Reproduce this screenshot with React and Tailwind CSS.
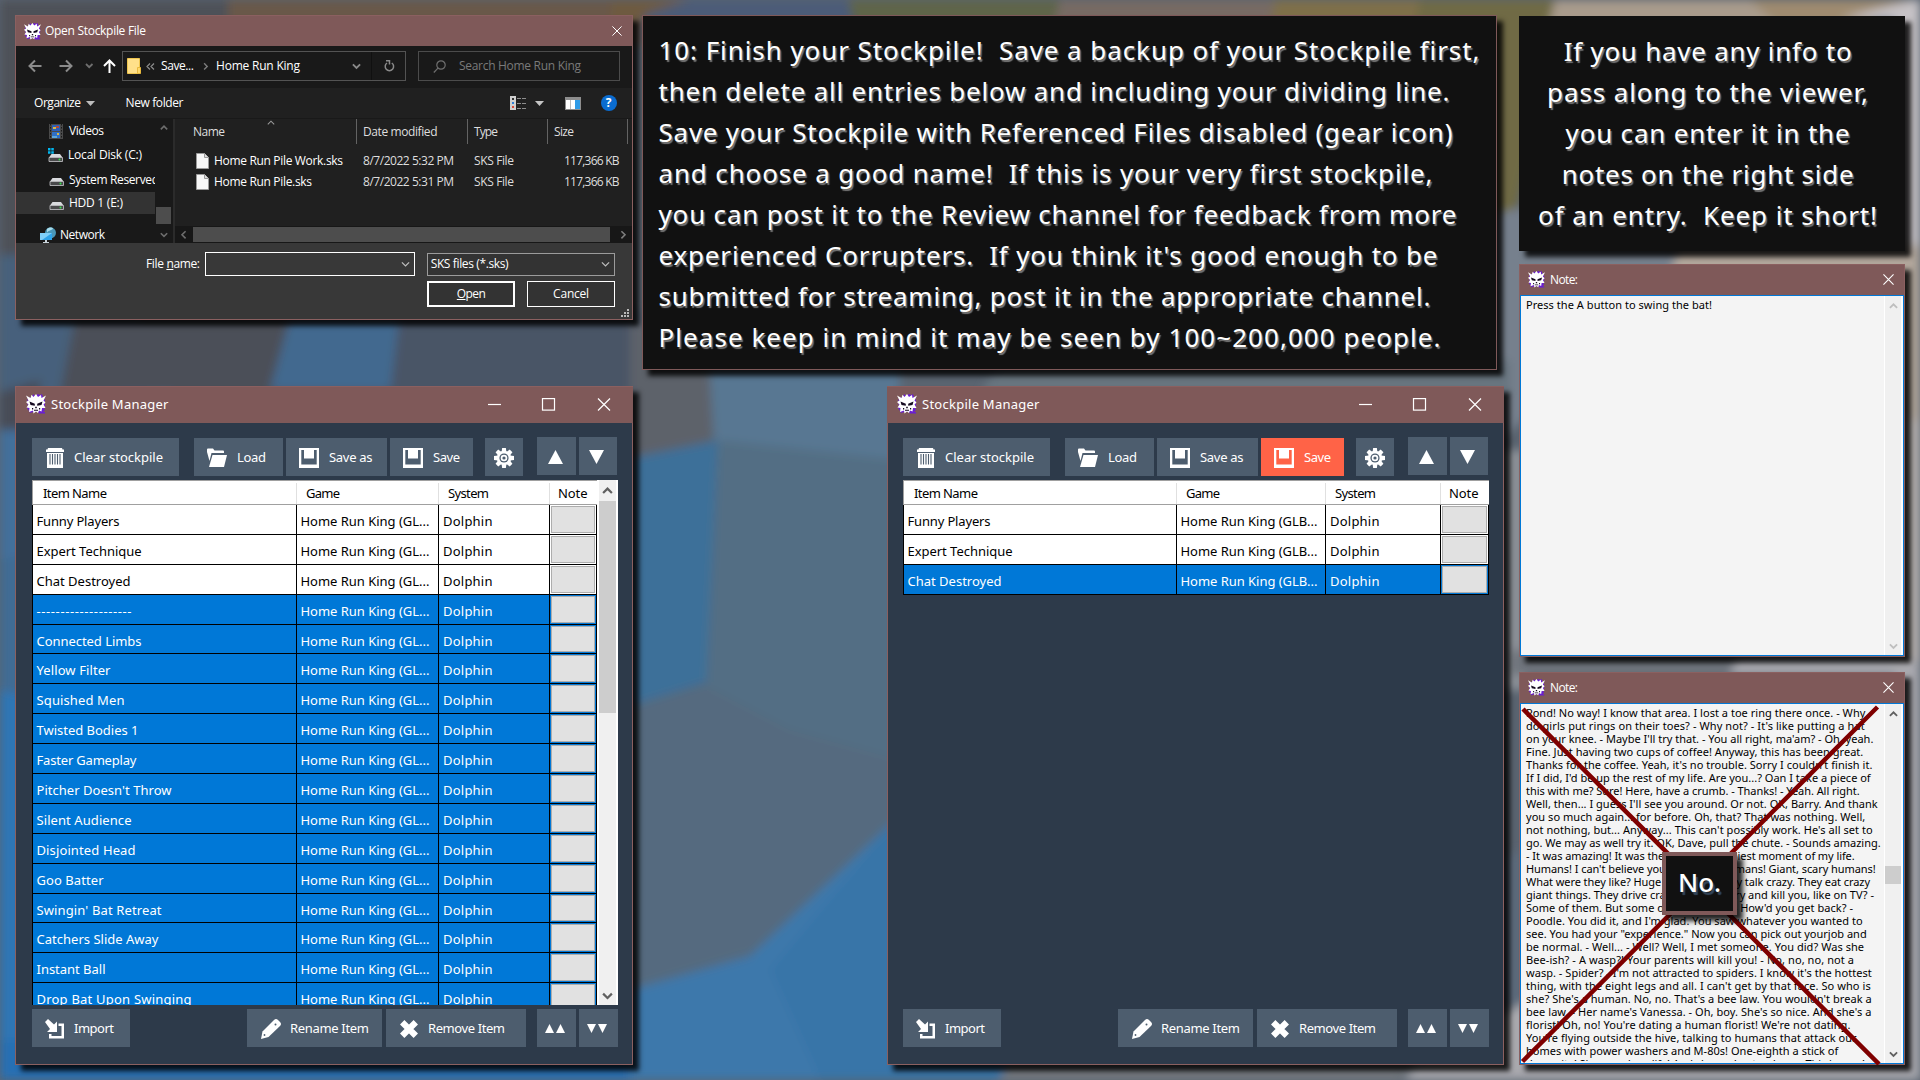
import React, { useLayoutEffect, useRef } from "react";

/* Text set to a fixed measure: tracking is worked out from the natural width. */
function Fit({ w, className = "", children }) {
  const ref = useRef(null);
  useLayoutEffect(() => {
    const el = ref.current;
    el.style.letterSpacing = "0px";
    const natural = el.getBoundingClientRect().width;
    const n = Math.max(1, el.textContent.length - 1);
    el.style.letterSpacing = `${(w - natural) / n}px`;
  }, [w, children]);
  return (
    <span ref={ref} className={`inline-block whitespace-pre ${className}`}>
      {children}
    </span>
  );
}

function Wallpaper() {
  const patches = [
    ["#4d5159", "0,0 240,0 225,60 400,400 0,400"],
    ["#69594a", "228,0 640,0 660,40 560,60 228,60"],
    ["#46607c", "0,255 60,255 160,330 175,400 0,420"],
    ["#4b4f58", "75,318 290,318 270,390 60,395"],
    ["#42698f", "290,318 420,318 400,390 270,390"],
    ["#4a5566", "400,310 640,310 640,395 390,395"],
    ["#464c57", "0,392 40,380 40,432 0,432"],
    ["#43709b", "0,430 40,430 40,560 0,560"],
    ["#3f6c94", "0,560 40,550 40,700 0,690"],
    ["#2f76b5", "0,690 40,700 40,1080 0,1080"],
    ["#276fb4", "0,1040 660,1040 660,1080 0,1080"],
    ["#6e5a40", "612,0 690,0 650,20 610,22"],
    ["#4c5c78", "645,14 690,0 850,0 860,40 640,40"],
    ["#5f6548", "848,0 1060,0 1050,40 858,40"],
    ["#776b63", "1060,0 1275,0 1268,40 1050,40"],
    ["#7f7048", "1275,0 1425,0 1410,40 1268,40"],
    ["#706b45", "1420,0 1555,0 1540,110 1515,215 1490,215 1490,40 1412,40"],
    ["#a99b8c", "1555,0 1755,0 1800,40 1545,40"],
    ["#9f8b70", "1750,0 1915,0 1840,40 1795,40"],
    ["#c6c2c6", "1915,0 1920,0 1920,330 1895,330 1895,20 1840,18"],
    ["#76808d", "1490,215 1520,208 1700,255 1680,280 1490,450"],
    ["#b3a79c", "1680,245 1920,245 1920,420 1890,420 1890,275 1670,275"],
    ["#5d626b", "630,320 720,350 712,442 630,462"],
    ["#587792", "708,345 900,345 900,470 714,442"],
    ["#68757f", "1000,360 1510,360 1510,395 980,395"],
    ["#3e7099", "630,458 718,440 708,682 630,708"],
    ["#546a7f", "630,706 708,682 900,650 900,815 752,955 630,990"],
    ["#536e84", "718,440 900,460 900,760 790,730 706,686"],
    ["#3c78ab", "630,990 750,956 900,815 1010,1060 1000,1080 630,1080"],
    ["#3875a8", "770,970 900,815 1010,1060 1000,1080 820,1080"],
    ["#74797f", "1008,1058 1420,1058 1400,1080 1000,1080"],
    ["#8b9097", "1495,450 1525,450 1525,690 1495,690"],
    ["#5d6c7e", "1497,860 1520,850 1520,1005 1497,1005"],
    ["#a9a9ae", "1420,1055 1530,1000 1920,1050 1920,1080 1405,1080"],
    ["#a9a9af", "1730,650 1920,640 1920,1080 1895,1080 1895,675 1730,675"],
    ["#70747d", "1510,650 1740,650 1730,675 1510,675"],
    ["#b8b2b0", "1895,420 1920,420 1920,660 1895,660"],
  ];
  return (
    <svg className="absolute inset-0" width="1920" height="1080" viewBox="0 0 1920 1080">
      <defs>
        <filter id="soft" x="-2%" y="-2%" width="104%" height="104%">
          <feGaussianBlur stdDeviation="5" />
        </filter>
      </defs>
      <rect width="1920" height="1080" fill="#5a6470" />
      <g filter="url(#soft)">
        {patches.map(([fill, points], i) => (
          <polygon key={i} fill={fill} points={points} />
        ))}
      </g>
    </svg>
  );
}

function Skull({ className }) {
  return (
    <svg viewBox="0 0 20 20" className={`shrink-0 ${className}`}>
      <path fill="#6a1ed2" d="M6 3L7 0l2 2 3-2 2 1 2-1 1 3 2 3v5l-1 3 1 2-2 2h2v1.500h-6L12 18H7l-3 1-1-2-2-3 1-2-1-4 1-4z" />
      <path fill="#fff" d="M0 1.500L4.500 4 5.500.8 7.500 3 10 0l2 3 3-2 .5 3L20 1.500 17.500 6.500 19.500 8.500 17.500 10.500 19.500 14 16 14l-.5 3.500L13 16.500l-1 2.500-2-1.500L7.500 19.500 7 16.500 3 18l.5-4L.5 13.500 2.500 10.500 0 8l2.500-1.500z" />
      <path fill="#150a20" d="M3.500 7.500L8.800 9.800v2L4.500 11zM16.500 7.500L11.200 9.800v2L15.500 11zM9.200 12.800h1.600v1.500H9.200zM6 14h1.200v1.500H6zM13 14h1.200v1.500H13zM8 15.800h4v1H8z" />
    </svg>
  );
}

function CloseGlyph({ size = 11 }) {
  return (
    <svg width={size} height={size} viewBox="0 0 12 12" className="shrink-0" stroke="#fff" strokeWidth="1.2" fill="none">
      <path d="M.5.5l11 11M11.500.5l-11 11" />
    </svg>
  );
}

function Chevron({ dir = "down", color = "#606060", w = 9, sw = 2 }) {
  const d = {
    down: "M1 1.500l4 4 4-4",
    up: "M1 5.500l4-4 4 4",
    left: "M7 -1l-4.500 4.500 4.500 4.500",
    right: "M3 -1l4.500 4.500-4.500 4.500",
  }[dir];
  return (
    <svg width={w} height={w * 0.7} viewBox="0 0 10 7" className="shrink-0 overflow-visible" fill="none" stroke={color} strokeWidth={sw}>
      <path d={d} />
    </svg>
  );
}

/* ---------- file dialog ---------- */

function DriveIcon({ windows }) {
  return (
    <svg width="15" height="15" viewBox="0 0 15 15" className="shrink-0">
      {windows && (
        <path fill="#00b7f0" d="M0 0h2.500v2.500H0zM3.300 0h2.500v2.500H3.300zM0 3.300h2.500v2.500H0zM3.300 3.300h2.500v2.500H3.300z" />
      )}
      <path d="M3.500 6h8.500l2.500 3.500H1z" fill="#d9dade" />
      <path d="M1 9.500h13.500v4H1z" fill="#4a4a4c" stroke="#c8c8cc" strokeWidth=".8" />
      <circle cx="11.500" cy="11.500" r="1" fill="#35e04a" />
    </svg>
  );
}

function VideoIcon() {
  return (
    <svg width="14" height="15" viewBox="0 0 14 15" className="shrink-0">
      <rect width="14" height="15" fill="#4a4a4a" />
      <rect x="3" y="1" width="8" height="6" fill="#2c5fb8" />
      <rect x="3" y="8" width="8" height="6" fill="#2f6fc6" />
      <path d="M4 3h3v2H4zM8 9h2v2H8z" fill="#d8b545" />
      <path d="M7 2h3v2H7z" fill="#b5483a" />
      <path d="M3 12h5v2H3z" fill="#5aa8dd" />
      <path d="M1.500 0v15M12.500 0v15" stroke="#191919" strokeDasharray="1.500 1.500" />
    </svg>
  );
}

function NetworkIcon() {
  return (
    <svg width="17" height="16" viewBox="0 0 17 16" className="shrink-0">
      <circle cx="10.500" cy="5.800" r="5.500" fill="#4a97b8" />
      <path d="M7 2c2-2 5-2 6-.5-1 2-4 1.500-6 4z" fill="#a9dcea" />
      <path d="M0 6h12v7H0z" fill="#2fa4ea" />
      <path d="M0 6h12L2 13H0z" fill="#7fd0fa" />
      <path d="M5 13h2v2h2v1H3v-1h2z" fill="#c9d3da" />
    </svg>
  );
}

function FileIcon() {
  return (
    <svg width="13" height="16" viewBox="0 0 13 16" className="shrink-0">
      <path d="M.5.5h8l4 4v11H.5z" fill="#f7f7f7" stroke="#9a9a9a" />
      <path d="M8.500.5v4h4" fill="#ddd" stroke="#9a9a9a" />
    </svg>
  );
}

function NavBar() {
  return (
    <div className="flex h-[42px] items-center bg-[#191919] pb-[2px] pl-[12px]">
      <svg width="90" height="16" viewBox="0 0 90 16" className="shrink-0" fill="none">
        <path d="M13.500 8H2M7 2.500L1.500 8 7 13.500M31.500 8H43M38 2.500L43.500 8 38 13.500" stroke="#8b8b8b" strokeWidth="2" />
        <path d="M58 6l3.200 3.200L64.500 6" stroke="#6f6f6f" strokeWidth="1.800" />
        <path d="M81.500 15V3M76 8l5.500-5.500L87 8" stroke="#fff" strokeWidth="2" />
      </svg>
      <div className="ml-[4px] flex h-[30px] w-[284px] items-center border border-[#535353] pl-[4px]">
        <svg width="14" height="16" viewBox="0 0 14 16" className="shrink-0">
          <path d="M.5.5h12v15H.5z" fill="#ffe08a" stroke="#efc54e" />
          <path d="M10.500 9.500h3v6h-3z" fill="#ffd96c" stroke="#e9b93c" />
        </svg>
        <svg width="9" height="7" viewBox="0 0 9 7" className="ml-[5px]" fill="none" stroke="#8c8c8c" strokeWidth="1.200">
          <path d="M4 .5L1 3.500l3 3M8 .5L5 3.500l3 3" />
        </svg>
        <div className="ml-[6px] w-[41px]"><Fit w={33}>Save...</Fit></div>
        <Chevron dir="right" color="#7c7c7c" w={7} sw={2} />
        <div className="ml-[7px] w-[136px]"><Fit w={84}>Home Run King</Fit></div>
        <Chevron color="#8a8a8a" w={9} />
        <div className="ml-[10px] flex h-full flex-1 items-center justify-center border-l border-[#101010] pl-[2px]">
          <svg width="11" height="12" viewBox="0 0 11 12" fill="none" stroke="#8a8a8a" strokeWidth="1.500">
            <path d="M7.800 3A4.200 4.200 0 1 1 3 3M2 .8h3.500v3.600" />
          </svg>
        </div>
      </div>
      <div className="ml-[12px] flex h-[30px] w-[202px] items-center border border-[#4b4b4b] pl-[14px] text-[#7a7a7a]">
        <svg width="13" height="13" viewBox="0 0 13 13" fill="none" stroke="#6f6f6f" strokeWidth="1.200">
          <circle cx="8" cy="5" r="4.200" />
          <path d="M5 8.200L.8 12.500" />
        </svg>
        <Fit w={122} className="ml-[13px]">Search Home Run King</Fit>
      </div>
    </div>
  );
}

function DialogToolbar() {
  return (
    <div className="flex h-[30px] items-center bg-[#202020] pl-[18px]">
      <Fit w={47}>Organize</Fit>
      <svg width="9" height="5" className="ml-[5px]"><path d="M0 0h9L4.500 5z" fill="#bdbdbd" /></svg>
      <div className="ml-[31px] w-[384px]"><Fit w={58}>New folder</Fit></div>
      <svg width="17" height="14" viewBox="0 0 17 14" className="shrink-0">
        <path d="M0 0h6v14H0z" fill="#d0d0d0" />
        <path d="M2 2h2v2H2z" fill="#333" />
        <path d="M2 6h2v2H2z" fill="#2f7fd8" />
        <path d="M2 10h2v2H2z" fill="#d84a3a" />
        <path d="M7 2.500h9M7 7.500h9M7 12.500h9" stroke="#8d8d8d" strokeDasharray="4 1" />
      </svg>
      <svg width="9" height="5" className="ml-[8px] shrink-0"><path d="M0 0h9L4.500 5z" fill="#c5c5c5" /></svg>
      <svg width="16" height="13" viewBox="0 0 16 13" className="ml-[21px] shrink-0">
        <path d="M0 0h16v13H0z" fill="#8d8d8d" />
        <path d="M1 3h9v9H1z" fill="#fff" />
        <path d="M5.500 3v9" stroke="#bbb" />
        <path d="M10 3h5v9h-5z" fill="#2f9be6" />
      </svg>
      <div className="ml-[20px] flex h-4 w-4 shrink-0 items-center justify-center rounded-full bg-[#0a6cd0] text-[12px] leading-none font-bold">?</div>
    </div>
  );
}

function TreeItem({ icon, label, w, active, className = "" }) {
  return (
    <div className={`flex w-[139px] shrink-0 items-center overflow-hidden ${active ? "bg-[#333333]" : ""} ${className}`}>
      <span className="flex w-[20px] shrink-0">{icon}</span>
      <Fit w={w}>{label}</Fit>
    </div>
  );
}

function FileRow({ name, w, date }) {
  return (
    <div className="flex h-[21px] items-center text-[#dedede]">
      <FileIcon />
      <div className="ml-[5px] w-[149px] text-white"><Fit w={w}>{name}</Fit></div>
      <div className="w-[111px]"><Fit w={91}>{date}</Fit></div>
      <div className="w-[90px]"><Fit w={40}>SKS File</Fit></div>
      <Fit w={55.5}>117,366 KB</Fit>
    </div>
  );
}

function Column({ label, w, className = "" }) {
  return (
    <div className={`flex h-[25px] shrink-0 items-center border-r border-[#636363] ${className}`}>
      <Fit w={w}>{label}</Fit>
    </div>
  );
}

function FileDialog() {
  return (
    <section className="absolute top-[15px] left-[15px] flex h-[305px] w-[618px] flex-col border border-[#8b6060] bg-[#383838] font-['Open_Sans',sans-serif] text-[12px] leading-[16px] text-white shadow-[6px_6px_5px_rgba(0,0,0,0.85)]">
      <header className="flex h-[30px] items-center bg-[#7f5959] pr-[10px] pl-[8px]">
        <Skull className="h-[17px] w-[17px]" />
        <Fit w={101} className="ml-[4px]">Open Stockpile File</Fit>
        <div className="ml-auto"><CloseGlyph size={10} /></div>
      </header>
      <NavBar />
      <DialogToolbar />
      <div className="flex h-[125px] border-t border-[#191919]">
        <nav className="flex w-[157px] overflow-hidden bg-[#191919]">
          <div className="flex w-[139px] flex-col">
            <TreeItem className="h-[24px] pl-[33px]" icon={<VideoIcon />} label="Videos" w={35} />
            <TreeItem className="h-[24px] pl-[32px]" icon={<DriveIcon windows />} label="Local Disk (C:)" w={74} />
            <TreeItem className="h-[25px] pl-[33px]" icon={<DriveIcon />} label="System Reserved" w={90} />
            <TreeItem className="h-[22px] pl-[33px]" icon={<DriveIcon />} label="HDD 1 (E:)" w={54} active />
            <TreeItem className="mt-[11px] h-[20px] pl-[24px]" icon={<NetworkIcon />} label="Network" w={45} />
          </div>
          <div className="flex w-[17px] flex-col items-center">
            <div className="flex h-[17px] items-center"><Chevron dir="up" color="#6d6d6d" w={8} /></div>
            <div className="mt-[71px] h-[17px] w-[15px] shrink-0 bg-[#4d4d4d]" />
            <div className="mt-auto mb-[5px] flex"><Chevron color="#6d6d6d" w={8} /></div>
          </div>
        </nav>
        <div className="w-[2px] bg-[#2b2b2b]" />
        <div className="flex flex-1 flex-col bg-[#202020]">
          <div className="flex text-[#dedede]">
            <Column label="Name" w={32} className="w-[182px] pl-[18px]" />
            <Column label="Date modified" w={74.5} className="w-[111px] pl-[6px]" />
            <Column label="Type" w={24} className="w-[80px] pl-[6px]" />
            <Column label="Size" w={20} className="w-[80px] pl-[6px]" />
            <span className="absolute top-[104px] left-[251px] flex"><Chevron dir="up" color="#9a9a9a" w={8} sw={1.3} /></span>
          </div>
          <div className="mt-[6px] pl-[21px]">
            <FileRow name="Home Run Pile Work.sks" w={129} date="8/7/2022 5:32 PM" />
            <FileRow name="Home Run Pile.sks" w={98} date="8/7/2022 5:31 PM" />
          </div>
          <div className="mt-auto flex h-[17px] items-center bg-[#171717]">
            <div className="flex w-[18px] pl-[5px]"><Chevron dir="left" color="#6d6d6d" w={8} /></div>
            <div className="h-[15px] w-[417px] bg-[#4d4d4d]" />
            <div className="ml-auto flex pr-[5px]"><Chevron dir="right" color="#7d7d7d" w={8} /></div>
          </div>
        </div>
      </div>
      <footer className="flex flex-1 flex-col">
        <div className="mt-[9px] flex h-[24px] items-center pl-[130px]">
          <Fit w={54}>File <u>n</u>ame:</Fit>
          <div className="ml-[5px] flex h-[24px] w-[210px] items-center justify-end border border-white pr-[4px]">
            <Chevron color="#bdbdbd" w={9} sw={1.4} />
          </div>
          <div className="ml-[12px] flex h-[23px] w-[188px] items-center justify-between border border-[#9b9b9b] bg-[#333] pr-[4px] pl-[3px]">
            <Fit w={78}>SKS files (*.sks)</Fit>
            <Chevron color="#bdbdbd" w={9} sw={1.4} />
          </div>
        </div>
        <div className="mt-[5px] flex pl-[411px]">
          <button className="h-[26px] w-[88px] border-2 border-white bg-[#333]"><Fit w={29}><u>O</u>pen</Fit></button>
          <button className="ml-[12px] h-[26px] w-[88px] border border-white bg-[#333]"><Fit w={36}>Cancel</Fit></button>
        </div>
        <svg width="9" height="9" viewBox="0 0 9 9" className="mt-[1px] mr-[3px] ml-auto" fill="#b9b9b9">
          <path d="M7 1h2v2H7zM7 4h2v2H7zM7 7h2v2H7zM4 4h2v2H4zM4 7h2v2H4zM1 7h2v2H1z" />
        </svg>
      </footer>
    </section>
  );
}

/* ---------- stockpile manager ---------- */

const TrashIcon = () => (
  <svg width="18" height="20" viewBox="0 0 18 20" className="shrink-0">
    <path fill="#fff" d="M2 0h14l.5 1.500H18v2.500H0V1.500h1.500zM1 5h16v15H1z" />
    <path stroke="#4d5d6e" strokeWidth="1.100" d="M4 6v10.500M6.500 6v10.500M9 6v10.500M11.500 6v10.500M14 6v10.500" />
  </svg>
);
const FolderIcon = () => (
  <svg width="20" height="19" viewBox="0 0 20 19" className="shrink-0" fill="#fff">
    <path d="M0 1.500Q0 .5 1 .5h5l1.500 2H16q1 0 1 1V5H4.500L2.500 13 0 4z" />
    <path d="M5.500 7H20l-3 12H2z" />
  </svg>
);
const FloppyIcon = () => (
  <svg width="20" height="20" viewBox="0 0 20 20" className="shrink-0" fill="#fff">
    <path fillRule="evenodd" d="M0 0h20v20H0zM2.300 2v14.500h15.400V2H15v8.500H5V2z" />
    <path fillRule="evenodd" d="M6 1h8v8H6zM10.800 2v4.500h2V2z" />
  </svg>
);
const GearIcon = () => (
  <svg width="20" height="20" viewBox="-10 -10 20 20" className="shrink-0">
    <g fill="#fff">
      {[0, 45, 90, 135, 180, 225, 270, 315].map((a) => (
        <path key={a} transform={`rotate(${a})`} d="M-1.900-10h3.800l.5 4h-4.800z" />
      ))}
      <circle r="7.200" />
    </g>
    <circle r="4.600" fill="#4d5d6e" />
    <circle r="3.300" fill="#fff" />
    <circle r="1.600" fill="#4d5d6e" />
  </svg>
);
const ImportIcon = () => (
  <svg width="20" height="20" viewBox="0 0 20 20" className="shrink-0" fill="#fff">
    <path d="M0 3L3 0l6 5.500 3-3V13H2l3-3z" />
    <path d="M13.500 4.500H19v15H4V15h2.500v2H16.500V7h-3z" />
  </svg>
);
const PencilIcon = () => (
  <svg width="20" height="20" viewBox="0 0 20 20" className="shrink-0">
    <path fill="#fff" d="M0 20l1.500-7.500L13 1q2-2 4 0l2 2q2 2 0 4L7.500 18z" />
    <circle cx="3.500" cy="16" r=".9" fill="#4d5d6e" />
    <circle cx="14.500" cy="5.500" r="1" fill="#4d5d6e" />
  </svg>
);
const CrossIcon = () => (
  <svg width="18" height="18" viewBox="0 0 18 18" className="shrink-0">
    <path stroke="#fff" strokeWidth="6.200" d="M2.200 2.200l13.600 13.600M15.800 2.200L2.200 15.800" />
  </svg>
);

function ToolButton({ icon, label, w, gap = "gap-[10px]", className = "" }) {
  return (
    <button className={`flex h-[38px] shrink-0 items-center bg-[#4d5d6e] pt-px ${gap} ${className}`}>
      {icon}
      {label && <Fit w={w}>{label}</Fit>}
    </button>
  );
}

function Triangles({ dir, count = 1 }) {
  const s = count === 1 ? 15 : 9;
  const h = count === 1 ? 14 : 9;
  return (
    <span className="-ml-[3px] flex gap-[2px]">
      {Array.from({ length: count }, (_, i) => (
        <svg key={i} width={s} height={h} viewBox="0 0 10 10" preserveAspectRatio="none">
          <path fill="#fff" d={dir === "up" ? "M5 0l5 10H0z" : "M0 0h10L5 10z"} />
        </svg>
      ))}
    </span>
  );
}

function GridRow({ name, w, game, gameW, selected, cols }) {
  return (
    <div className={`flex h-[29.900px] shrink-0 border-b border-l border-black ${selected ? "bg-[#0078d7] text-white" : "bg-white text-black"}`}>
      <div className={`flex items-center border-r border-black pt-[4px] pl-[3.500px] ${cols[0]}`}><Fit w={w}>{name}</Fit></div>
      <div className={`flex items-center border-r border-black pt-[4px] pl-[3.500px] ${cols[1]}`}><Fit w={gameW}>{game}</Fit></div>
      <div className={`flex items-center border-r border-black pt-[4px] pl-[4px] ${cols[2]}`}><Fit w={49.5}>Dolphin</Fit></div>
      <div className={`border-r border-black p-px ${cols[3]}`}>
        <div className="h-full border border-[#adadad] bg-[#e1e1e1]" />
      </div>
    </div>
  );
}

function GridHead({ cols }) {
  return (
    <div className="flex h-[25px] shrink-0 border-t border-b border-l border-[#a0a0a0] bg-white pt-[2px] text-black">
      <div className={`flex items-center border-r border-[#e0e0e0] pl-[10px] ${cols[0]}`}><Fit w={64}>Item Name</Fit></div>
      <div className={`flex items-center border-r border-[#e0e0e0] pl-[9px] ${cols[1]}`}><Fit w={34}>Game</Fit></div>
      <div className={`flex items-center border-r border-[#e0e0e0] pl-[9px] ${cols[2]}`}><Fit w={41}>System</Fit></div>
      <div className={`flex items-center pl-[8px] ${cols[3]}`}><Fit w={29.5}>Note</Fit></div>
    </div>
  );
}

function Manager({ className, rows, game, gameW, cols, selectedFrom, scroll, hotSave }) {
  return (
    <section className={`absolute top-[386px] flex h-[679px] flex-col border border-[#8b6060] bg-[#2d3a4a] font-['Noto_Sans',sans-serif] text-[13px] leading-[17px] text-white shadow-[6px_6px_5px_rgba(0,0,0,0.85)] ${className}`}>
      <header className="-mr-px flex h-[36px] shrink-0 items-center bg-[#7f5959] pr-[22px] pb-[2px] pl-[10px]">
        <Skull className="h-[20px] w-[20px]" />
        <Fit w={117.500} className="ml-[5px]">Stockpile Manager</Fit>
        <svg width="123" height="13" viewBox="0 0 123 13" className="ml-auto" fill="none" stroke="#fff" strokeWidth="1.200">
          <path d="M0 6.500h13" />
          <rect x="54.500" y=".6" width="12" height="11.500" />
          <path d="M110 .5l12 12M122 .5l-12 12" />
        </svg>
      </header>
      <div className="flex h-[57px] shrink-0 pt-[14px]">
        <ToolButton className="mt-px w-[147px] pl-[14px]" icon={<TrashIcon />} label="Clear stockpile" w={89} />
        <ToolButton className="mt-px ml-[15px] w-[89px] pl-[13px]" icon={<FolderIcon />} label="Load" w={29} />
        <ToolButton className="mt-px ml-[3px] w-[101px] pl-[13px]" icon={<FloppyIcon />} label="Save as" w={43.5} />
        <ToolButton className={`mt-px ml-[3px] w-[83px] pl-[13px] ${hotSave ? "bg-[#ff6347]!" : ""}`} icon={<FloppyIcon />} label="Save" w={27} />
        <ToolButton className="mt-px ml-[12px] w-[38px] justify-center" icon={<GearIcon />} />
        <ToolButton className="ml-[14px] w-[39px] justify-center" icon={<Triangles dir="up" />} />
        <ToolButton className="ml-[3px] w-[38px] justify-center" icon={<Triangles dir="down" />} />
      </div>
      <div className="flex h-[525px] w-[586px] shrink-0 overflow-hidden">
        <div className="flex flex-1 flex-col">
          <GridHead cols={cols} />
          {rows.map(([name, w], i) => (
            <GridRow key={name} name={name} w={w} game={game} gameW={gameW} cols={cols} selected={i >= selectedFrom} />
          ))}
        </div>
        {scroll && (
          <div className="flex w-[21px] flex-col items-center border-r-2 border-l-2 border-white bg-[#f0f0f0]">
            <div className="flex h-[21px] w-full items-center justify-center"><Chevron dir="up" w={11} /></div>
            <div className="h-[212px] w-full bg-[#cdcdcd]" />
            <div className="mt-auto mb-[5px] flex"><Chevron w={11} /></div>
          </div>
        )}
      </div>
      <div className="mt-[4px] flex">
        <ToolButton className="w-[98px] pl-[13px]" icon={<ImportIcon />} label="Import" w={40} gap="gap-[9px]" />
        <ToolButton className="ml-[117px] w-[135px] pl-[14px]" icon={<PencilIcon />} label="Rename Item" w={79} gap="gap-[9px]" />
        <ToolButton className="ml-[4px] w-[140px] pl-[14px]" icon={<CrossIcon />} label="Remove Item" w={77} />
        <ToolButton className="ml-[11px] w-[39px] justify-center" icon={<Triangles dir="up" count={2} />} />
        <ToolButton className="ml-[3px] w-[39px] justify-center" icon={<Triangles dir="down" count={2} />} />
      </div>
    </section>
  );
}

const FULL_ROWS = [
  ["Funny Players", 83], ["Expert Technique", 105], ["Chat Destroyed", 94], ["--------------------", 95],
  ["Connected Limbs", 105], ["Yellow Filter", 74], ["Squished Men", 88], ["Twisted Bodies 1", 102],
  ["Faster Gameplay", 100], ["Pitcher Doesn't Throw", 135], ["Silent Audience", 95], ["Disjointed Head", 99],
  ["Goo Batter", 67], ["Swingin' Bat Retreat", 125], ["Catchers Slide Away", 122], ["Instant Ball", 69],
  ["Drop Bat Upon Swinging", 155],
];

/* ---------- notes and captions ---------- */

function NoteWindow({ className, children, active, thumb }) {
  const arrow = active ? "#606060" : "#bfbfbf";
  return (
    <section className={`absolute left-[1519px] flex w-[386px] flex-col border border-[#8b6060] bg-[#7f5959] font-['Noto_Sans',sans-serif] text-[11px] leading-[13px] shadow-[6px_6px_5px_rgba(0,0,0,0.85)] ${className}`}>
      <header className="flex h-[30px] shrink-0 items-center pr-[10px] pb-[2px] pl-[8px] font-['Open_Sans',sans-serif] text-[12px] text-white">
        <Skull className="h-[17px] w-[17px]" />
        <Fit w={28} className="ml-[5px]">Note:</Fit>
        <div className="ml-auto"><CloseGlyph /></div>
      </header>
      <div className="flex min-h-0 flex-1 border border-[#0078d7] bg-[#f4f4f4] text-black">
        <div className="my-[2px] flex-1 overflow-hidden pl-[5px]">{children}</div>
        <div className="flex w-[19px] flex-col items-center border-r-2 border-l border-white bg-[#f0f0f0]">
          <div className="mt-[7px] flex"><Chevron dir="up" color={arrow} w={9} /></div>
          {thumb && <div className="mt-[149px] h-[18px] w-full bg-[#cdcdcd]" />}
          <div className="mt-auto mb-[6px] flex"><Chevron color={arrow} w={9} /></div>
        </div>
      </div>
    </section>
  );
}

const SCRIPT = [
  ["Pond! No way! I know that area. I lost a toe ring there once. - Why", 1066],
  ["do girls put rings on their toes? - Why not? - It's like putting a hat", 1064],
  ["on your knee. - Maybe I'll try that. - You all right, ma'am? - Oh, yeah.", 1090],
  ["Fine. Just having two cups of coffee! Anyway, this has been great.", 1060],
  ["Thanks for the coffee. Yeah, it's no trouble. Sorry I couldn't finish it.", 1087],
  ["If I did, I'd be up the rest of my life. Are you...? Oan I take a piece of", 1082],
  ["this with me? Sure! Here, have a crumb. - Thanks! - Yeah. All right.", 1049],
  ["Well, then... I guess I'll see you around. Or not. OK, Barry. And thank", 1103],
  ["you so much again... for before. Oh, that? That was nothing. Well,", 1066],
  ["not nothing, but... Anyway... This can't possibly work. He's all set to", 1088],
  ["go. We may as well try it. OK, Dave, pull the chute. - Sounds amazing.", 1112],
  ["- It was amazing! It was the scariest, happiest moment of my life.", 1034],
  ["Humans! I can't believe you were with humans! Giant, scary humans!", 1097],
  ["What were they like? Huge and crazy. They talk crazy. They eat crazy", 1080],
  ["giant things. They drive crazy. - Do they try and kill you, like on TV? -", 1092],
  ["Some of them. But some of them don't. - How'd you get back? -", 1029],
  ["Poodle. You did it, and I'm glad. You saw whatever you wanted to", 1058],
  ["see. You had your \"experience.\" Now you can pick out yourjob and", 1070],
  ["be normal. - Well... - Well? Well, I met someone. You did? Was she", 1062],
  ["Bee-ish? - A wasp?! Your parents will kill you! - No, no, no, not a", 1032],
  ["wasp. - Spider? - I'm not attracted to spiders. I know it's the hottest", 1085],
  ["thing, with the eight legs and all. I can't get by that face. So who is", 1082],
  ["she? She's a human. No, no. That's a bee law. You wouldn't break a", 1085],
  ["bee law. - Her name's Vanessa. - Oh, boy. She's so nice. And she's a", 1084],
  ["florist! Oh, no! You're dating a human florist! We're not dating.", 1021],
  ["You're flying outside the hive, talking to humans that attack our", 1040],
  ["homes with power washers and M-80s! One-eighth a stick of", 985],
  ["dynamite! She saved my life! And she understands me. This is over!", 1065],
];

const STEPS = [
  ["10: Finish your Stockpile!  Save a backup of your Stockpile first,", 821],
  ["then delete all entries below and including your dividing line.", 791],
  ["Save your Stockpile with Referenced Files disabled (gear icon)", 794],
  ["and choose a good name!  If this is your very first stockpile,", 774],
  ["you can post it to the Review channel for feedback from more", 798],
  ["experienced Corrupters.  If you think it's good enough to be", 779],
  ["submitted for streaming, post it in the appropriate channel.", 772],
  ["Please keep in mind it may be seen by 100~200,000 people.", 782],
];

const HINT = [
  ["If you have any info to", 288],
  ["pass along to the viewer,", 321],
  ["you can enter it in the", 284],
  ["notes on the right side", 292],
  ["of an entry.  Keep it short!", 339],
];

export default function App() {
  return (
    <main className="relative h-[1080px] w-[1920px] overflow-hidden bg-[#5a6470]">
      <Wallpaper />
      <FileDialog />

      <section className="absolute top-[15px] left-[642px] flex h-[355px] w-[855px] flex-col border border-[#7f5959] bg-[#111] pt-[13.500px] pl-[15.500px] font-['Noto_Sans',sans-serif] text-[26px] leading-[41px] text-white shadow-[6px_6px_5px_rgba(0,0,0,0.85)] [text-shadow:1.5px_1.5px_1px_#777]">
        {STEPS.map(([t, w]) => (
          <div key={t} className="h-[41px]"><Fit w={w}>{t}</Fit></div>
        ))}
      </section>

      <section className="absolute top-[16px] left-[1519px] flex h-[235px] w-[386px] flex-col bg-[#111] pt-[15px] pr-[8px] text-center font-['Noto_Sans',sans-serif] text-[26px] leading-[41px] text-white shadow-[6px_6px_5px_rgba(0,0,0,0.85)] [text-shadow:1.5px_1.5px_1px_#777]">
        {HINT.map(([t, w]) => (
          <div key={t} className="h-[41px]"><Fit w={w}>{t}</Fit></div>
        ))}
      </section>

      <Manager
        className="left-[15px] w-[618px] pl-[16px] [&>header]:-ml-[16px]"
        rows={FULL_ROWS}
        game="Home Run King (GL..."
        gameW={129}
        cols={["w-[264px]", "w-[142px]", "w-[111px]", "w-[47px]"]}
        selectedFrom={3}
        scroll
      />
      <Manager
        className="left-[887px] w-[617px] pl-[15px] [&>header]:-ml-[16px]"
        rows={FULL_ROWS.slice(0, 3)}
        game="Home Run King (GLB..."
        gameW={137}
        cols={["w-[273px]", "w-[149px]", "w-[115px]", "w-[48px]"]}
        selectedFrom={2}
        hotSave
      />

      <NoteWindow className="top-[264px] h-[393px]">
        <Fit w={186}>Press the A button to swing the bat!</Fit>
      </NoteWindow>

      <NoteWindow className="top-[672px] h-[393px]" active thumb>
        {SCRIPT.map(([t, end]) => (
          <div key={t} className="h-[13px]"><Fit w={(end - 48) / 3}>{t}</Fit></div>
        ))}
      </NoteWindow>
      <svg className="absolute top-[703px] left-[1519px]" width="370" height="362" viewBox="1519 703 370 362" stroke="#7f0000" strokeWidth="4.500">
        <path d="M1523 709L1879 1064M1877.500 707L1522.500 1061.500" />
      </svg>
      <div className="absolute top-[852px] left-[1662px] flex h-[63px] w-[75px] items-center justify-center border-4 border-[#7f5959] bg-[#111] pb-[2px] font-['Noto_Sans',sans-serif] text-[26px] font-medium text-white shadow-[6px_6px_5px_rgba(0,0,0,0.85)] [text-shadow:2px_3px_1px_#34475c]">
        <Fit w={43}>No.</Fit>
      </div>
    </main>
  );
}
